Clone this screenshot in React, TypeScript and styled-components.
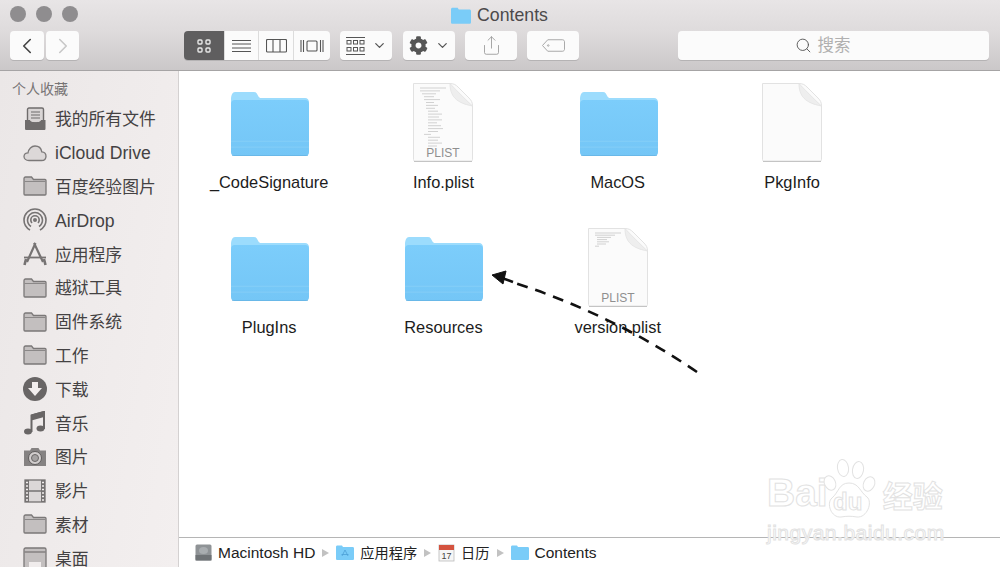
import { ReactNode } from "react"
import styled, { createGlobalStyle } from "styled-components"
import { ChevronDown, ChevronLeft, ChevronRight, Search, Share } from "lucide-react"
import { FaCog } from "react-icons/fa"

const GlobalStyle = createGlobalStyle`
    html, body {
        margin: 0;
        padding: 0;
        background: #fff;
    }
    body {
        font-family: "Liberation Sans", "Noto Sans CJK SC", sans-serif;
    }
`

const FolderGlyph = () => (
    <svg width="24" height="20" viewBox="0 0 24 20">
        <path d="M1 18V2.500C1 1.700 1.700 1 2.500 1H8.500L10.500 3.500H22C22.600 3.500 23 4 23 4.500V18C23 18.600 22.600 19 22 19H2C1.400 19 1 18.600 1 18Z" fill="#c3bfbf" stroke="#7b7878" strokeWidth="1.300" />
        <path d="M1.500 5.500H22.500" stroke="#8b8888" strokeWidth="1" />
    </svg>
)

const sidebarIcons: Record<string, ReactNode> = {
    folder: <FolderGlyph />,
    files: (
        <svg width="24" height="24" viewBox="0 0 24 24">
            <rect x="4.500" y="1" width="16" height="15" rx="1.500" fill="#d9d5d5" stroke="#6f6c6c" strokeWidth="1.400" />
            <path d="M8 5H17M8 8H17M8 11H17" stroke="#6f6c6c" strokeWidth="1.200" />
            <path d="M2 13H7C7 16 18 16 18 13H22.500V21.500C22.500 22.500 22 23 21 23H3.500C2.500 23 2 22.500 2 21.500Z" fill="#6f6c6c" />
        </svg>
    ),
    cloud: (
        <svg width="24" height="18" viewBox="0 0 24 18">
            <path d="M6 16.500C3 16.500 1 14.800 1 12.500C1 10.300 2.800 8.800 5 8.800C5.600 5 8.500 2 12 2C15.500 2 18.200 4.500 18.800 7.800C21.200 8 23 9.800 23 12.200C23 14.800 21 16.500 18.500 16.500Z" fill="#dcd8d8" stroke="#7b7878" strokeWidth="1.300" />
        </svg>
    ),
    airdrop: (
        <svg width="24" height="24" viewBox="0 0 24 24" fill="none" stroke="#767373">
            <path d="M7 22C3.500 20 1 16.300 1 12C1 6 6 1 12 1C18 1 23 6 23 12C23 16.300 20.500 20 17 22" strokeWidth="1.600" />
            <path d="M8 18.500C5.800 17 4.500 14.700 4.500 12C4.500 7.900 7.900 4.500 12 4.500C16.100 4.500 19.500 7.900 19.500 12C19.500 14.700 18.200 17 16 18.500" strokeWidth="1.600" />
            <path d="M9 15C8.200 14.200 7.800 13.200 7.800 12C7.800 9.700 9.700 7.800 12 7.800C14.300 7.800 16.200 9.700 16.200 12C16.200 13.200 15.800 14.200 15 15" strokeWidth="1.600" />
            <circle cx="12" cy="12" r="2" fill="#767373" stroke="none" />
        </svg>
    ),
    apps: (
        <svg width="24" height="24" viewBox="0 0 24 24" fill="none" stroke="#767373">
            <path d="M12.500 1L4 20M11 1L20 20" strokeWidth="2.200" />
            <path d="M1 15.500H23" strokeWidth="1.800" />
            <path d="M3 17L1.500 23M21 17L22.500 23" strokeWidth="2.600" />
        </svg>
    ),
    download: (
        <svg width="24" height="24" viewBox="0 0 24 24">
            <circle cx="12" cy="12" r="12" fill="#686565" />
            <path d="M9 5H15V11H19L12 19L5 11H9Z" fill="#f2eeee" />
        </svg>
    ),
    music: (
        <svg width="24" height="24" viewBox="0 0 24 24">
            <path d="M8.500 4.500L21 1V18" fill="none" stroke="#696666" strokeWidth="2" />
            <path d="M8.500 4.500V21M8.500 4.500L21 1V5L8.500 8.500Z" fill="#696666" stroke="#696666" strokeWidth="2" />
            <ellipse cx="5" cy="20.500" rx="4" ry="3" fill="#696666" />
            <ellipse cx="17.500" cy="17.500" rx="4" ry="3" fill="#696666" />
        </svg>
    ),
    camera: (
        <svg width="24" height="20" viewBox="0 0 24 20">
            <path d="M1 3.500H7L8.500 1H15.500L17 3.500H23V19H1Z" fill="#858282" />
            <circle cx="12" cy="11" r="6.500" fill="#d2cece" stroke="#5f5c5c" strokeWidth="1" />
            <circle cx="12" cy="11" r="3.500" fill="#a5a2a2" stroke="#6b6868" strokeWidth="1" />
        </svg>
    ),
    film: (
        <svg width="22" height="24" viewBox="0 0 22 24">
            <rect x="1" y="1" width="20" height="22" fill="#dbd7d7" stroke="#757272" strokeWidth="1.300" />
            <rect x="1" y="1" width="4" height="22" fill="#757272" />
            <rect x="17" y="1" width="4" height="22" fill="#757272" />
            <path d="M2 3.500H4M2 7H4M2 10.500H4M2 14H4M2 17.500H4M2 21H4M18 3.500H20M18 7H20M18 10.500H20M18 14H20M18 17.500H20M18 21H20" stroke="#f2eeee" strokeWidth="1.500" />
            <path d="M5 12H17" stroke="#757272" strokeWidth="1.500" />
        </svg>
    ),
    desktop: (
        <svg width="24" height="22" viewBox="0 0 24 22">
            <rect x="1" y="1" width="22" height="20" rx="1.500" fill="#c3bfbf" stroke="#7b7878" strokeWidth="1.300" />
            <path d="M1.500 5H22.500" stroke="#7b7878" strokeWidth="1.300" />
            <rect x="6" y="15" width="12" height="6" fill="#f0ecec" />
        </svg>
    ),
}

const sidebarItems = [
    { icon: "files", label: "我的所有文件" },
    { icon: "cloud", label: "iCloud Drive", latin: true },
    { icon: "folder", label: "百度经验图片" },
    { icon: "airdrop", label: "AirDrop", latin: true },
    { icon: "apps", label: "应用程序" },
    { icon: "folder", label: "越狱工具" },
    { icon: "folder", label: "固件系统" },
    { icon: "folder", label: "工作" },
    { icon: "download", label: "下载" },
    { icon: "music", label: "音乐" },
    { icon: "camera", label: "图片" },
    { icon: "film", label: "影片" },
    { icon: "folder", label: "素材" },
    { icon: "desktop", label: "桌面" },
]

const BigFolder = () => (
    <svg width="78" height="64" viewBox="0 0 78 65" preserveAspectRatio="none">
        <defs>
            <linearGradient id="folderFront" x1="0" y1="0" x2="0" y2="1">
                <stop offset="0" stopColor="#7ccdfb" />
                <stop offset="1" stopColor="#74c6f6" />
            </linearGradient>
        </defs>
        <path d="M0 8C0 3 1.500 0 4 0H23C25.500 0 26 2 27.500 4.500C28 5.500 29 6 30 6H74C76.500 6 78 8 78 10V20H0Z" fill="#9cdcfd" />
        <path d="M0 12C0 9.500 1.500 8 3.500 8H74.500C76.500 8 78 9.500 78 12V61C78 63.500 76.500 65 74.500 65H3.500C1.500 65 0 63.500 0 61Z" fill="url(#folderFront)" />
        <path d="M0 50H78M0 56H78" stroke="#8cd3f8" strokeWidth="1" opacity="0.7" />
        <path d="M1 64.500H77" stroke="#62aedf" strokeWidth="1" opacity="0.6" />
    </svg>
)

const codeLines = (dense: boolean) => {
    const lines = dense
        ? [[8, 26], [8, 20], [10, 14], [12, 10], [12, 16], [14, 8], [14, 12], [14, 9], [16, 10], [16, 14], [16, 11], [16, 14], [16, 9], [16, 13], [16, 15], [16, 10], [12, 7], [16, 12], [16, 10], [16, 14], [16, 9]]
        : [[8, 26], [8, 20], [10, 14], [10, 10], [10, 12], [10, 9], [8, 4]]
    const step = dense ? 2.900 : 2.200
    return lines.map(([x, w], i) => (
        <path key={i} d={`M${x} ${6 + i * step}H${x + w}`} stroke="#b5b5b5" strokeWidth="0.600" />
    ))
}

const PlistFile = ({ dense, label }: { dense: boolean; label?: string }) => (
    <svg width="62" height="80" viewBox="0 0 62 80">
        <path d="M1.500 1.500H38C42 1.500 44 3 46 5L57 16C59.500 18.500 60.500 20.500 60.500 24V77.500C60.500 78.500 60 79 59 79H3C2 79 1.500 78.500 1.500 77.500Z" fill="#fbfbfb" stroke="#e2e2e2" strokeWidth="1" />
        <path d="M2 79.500H60" stroke="#c4c4c4" strokeWidth="1" />
        <path d="M38 1.500C38 14 44 21 60.500 24C53 17 45 9 38 1.500Z" fill="#eeeeee" stroke="#e2e2e2" strokeWidth="0.800" />
        {label && codeLines(dense)}
        {label && <text x="31" y="75" textAnchor="middle" fontSize="12" fill="#8f8f8f" fontFamily="Liberation Sans">{label}</text>}
    </svg>
)

const files = [
    { kind: "folder", label: "_CodeSignature" },
    { kind: "dense", label: "Info.plist" },
    { kind: "folder", label: "MacOS" },
    { kind: "blank", label: "PkgInfo" },
    { kind: "folder", label: "PlugIns" },
    { kind: "folder", label: "Resources" },
    { kind: "sparse", label: "version.plist" },
]

const SmallFolder = ({ apps }: { apps?: boolean }) => (
    <svg width="18" height="15" viewBox="0 0 18 15">
        <path d="M0 2C0 1 .5 .5 1.500 .5H6L7 2H16.500C17.500 2 18 2.500 18 3.500V13.500C18 14.500 17.500 15 16.500 15H1.500C.5 15 0 14.500 0 13.500Z" fill="#7accf8" />
        {apps && <path d="M9 5L6 11M9 5L12 11M5.500 9.500H12.500" stroke="#4b9fd6" strokeWidth="0.800" fill="none" />}
    </svg>
)

const PathArrow = () => (
    <svg width="7" height="8" viewBox="0 0 7 8"><path d="M0 0L7 4L0 8Z" fill="#c2c2c2" /></svg>
)

export default function App() {
    return (
        <>
            <GlobalStyle />
            <Window>
                <Toolbar>
                    <TitleRow>
                        <Lights><Light /><Light /><Light /></Lights>
                        <Title>
                            <SmallFolder />
                            Contents
                        </Title>
                    </TitleRow>
                    <ControlRow>
                        <Segment>
                            <ToolButton $width={34}><ChevronLeft size={26} strokeWidth={1.500} color="#444" /></ToolButton>
                        </Segment>
                        <Segment $gap={2}>
                            <ToolButton $width={33}><ChevronRight size={26} strokeWidth={1.500} color="#c8c8c8" /></ToolButton>
                        </Segment>
                        <ViewGroup>
                            <ViewButton $active $width={40}>
                                <svg width="14" height="14" viewBox="0 0 14 14" fill="none" stroke="#e8e8e8" strokeWidth="1.400">
                                    <rect x="1" y="1" width="4" height="4" rx="1" />
                                    <rect x="9" y="1" width="4" height="4" rx="1" />
                                    <rect x="1" y="9" width="4" height="4" rx="1" />
                                    <rect x="9" y="9" width="4" height="4" rx="1" />
                                </svg>
                            </ViewButton>
                            <ViewButton $width={34}>
                                <svg width="19" height="14" viewBox="0 0 19 14" stroke="#555" strokeWidth="1">
                                    <path d="M0 1.500H19M0 5H19M0 9H19M0 12.500H19" />
                                </svg>
                            </ViewButton>
                            <ViewButton $width={35}>
                                <svg width="21" height="14" viewBox="0 0 21 14" fill="none" stroke="#555" strokeWidth="1.100">
                                    <rect x=".5" y=".5" width="20" height="12.500" rx="1" />
                                    <path d="M7 .5V13M14 .5V13" />
                                </svg>
                            </ViewButton>
                            <ViewButton $width={37}>
                                <svg width="24" height="14" viewBox="0 0 24 14" fill="none" stroke="#555" strokeWidth="1.100">
                                    <rect x="7" y="2" width="10" height="10" rx="1" />
                                    <path d="M1 1V13M3.500 1V13M20.500 1V13M23 1V13" />
                                </svg>
                            </ViewButton>
                        </ViewGroup>
                        <ToolButton $width={52} $left={10}>
                            <svg width="19" height="18" viewBox="0 0 19 18" fill="none" stroke="#555" strokeWidth="1">
                                <path d="M0 .5H19M0 17.500H19" />
                                <rect x="1" y="3.500" width="4" height="3.500" />
                                <rect x="7.500" y="3.500" width="4" height="3.500" />
                                <rect x="14" y="3.500" width="4" height="3.500" />
                                <rect x="1" y="10.500" width="4" height="3.500" />
                                <rect x="7.500" y="10.500" width="4" height="3.500" />
                                <rect x="14" y="10.500" width="4" height="3.500" />
                            </svg>
                            <ChevronDown size={15} strokeWidth={2} color="#555" />
                        </ToolButton>
                        <ToolButton $width={52} $left={11}>
                            <FaCog size={19} color="#555" />
                            <ChevronDown size={15} strokeWidth={2} color="#555" />
                        </ToolButton>
                        <ToolButton $width={52} $left={10}>
                            <Share size={21} strokeWidth={1} color="#9a9a9a" />
                        </ToolButton>
                        <ToolButton $width={52} $left={10}>
                            <svg width="23" height="13" viewBox="0 0 24 13" fill="none" stroke="#a5a5a5" strokeWidth="1">
                                <path d="M6 .5H21.500C22.500 .5 23.500 1.500 23.500 2.500V10.500C23.500 11.500 22.500 12.500 21.500 12.500H6L.5 6.500Z" />
                                <circle cx="6.500" cy="6.500" r="0.800" />
                            </svg>
                        </ToolButton>
                        <SearchField>
                            <Search size={17} strokeWidth={1.300} color="#555" />
                            <SearchHint>搜索</SearchHint>
                        </SearchField>
                    </ControlRow>
                </Toolbar>
                <Body>
                    <Sidebar>
                        <SectionTitle>个人收藏</SectionTitle>
                        {sidebarItems.map((item, index) => (
                            <SideRow key={index}>
                                <SideIcon>{sidebarIcons[item.icon]}</SideIcon>
                                <SideLabel $latin={item.latin}>{item.label}</SideLabel>
                            </SideRow>
                        ))}
                    </Sidebar>
                    <Content>
                        <FileGrid>
                            {files.map(file => (
                                <FileCell key={file.label}>
                                    <FileIcon>
                                        {file.kind === "folder" && <FolderSlot><BigFolder /></FolderSlot>}
                                        {file.kind === "dense" && <PlistFile dense label="PLIST" />}
                                        {file.kind === "sparse" && <PlistFile dense={false} label="PLIST" />}
                                        {file.kind === "blank" && <PlistFile dense={false} />}
                                    </FileIcon>
                                    <FileName>{file.label}</FileName>
                                </FileCell>
                            ))}
                        </FileGrid>
                        <PathBar>
                            <PathItem>
                                <svg width="17" height="17" viewBox="0 0 17 17">
                                    <rect x=".5" y=".5" width="16" height="16" rx="1.500" fill="#8f9396" />
                                    <rect x=".5" y="11" width="16" height="5.500" fill="#6f7376" />
                                    <ellipse cx="8.500" cy="6.500" rx="4.500" ry="3.500" fill="#a9adb0" />
                                </svg>
                                Macintosh HD
                            </PathItem>
                            <PathArrow />
                            <PathItem $cjk><SmallFolder apps />应用程序</PathItem>
                            <PathArrow />
                            <PathItem $cjk>
                                <svg width="17" height="18" viewBox="0 0 17 18">
                                    <rect x="1" y="1" width="15" height="16" fill="#f6f6f6" stroke="#bbb" strokeWidth="0.800" />
                                    <rect x="1" y="1" width="15" height="5" fill="#d4533f" />
                                    <text x="8.500" y="15" textAnchor="middle" fontSize="9" fill="#444" fontFamily="Liberation Sans">17</text>
                                </svg>
                                日历
                            </PathItem>
                            <PathArrow />
                            <PathItem><SmallFolder />Contents</PathItem>
                        </PathBar>
                    </Content>
                </Body>
                <ArrowOverlay width="1000" height="567" viewBox="0 0 1000 567">
                    <path d="M697 372Q612 314 512 282" stroke="#111" strokeWidth="2.600" strokeDasharray="11 8" fill="none" />
                    <path d="M492 275L506 271L503 284Z" fill="#111" stroke="#111" strokeWidth="1" />
                    <path d="M502 278L513 282" stroke="#111" strokeWidth="2.600" />
                </ArrowOverlay>
                <Watermark>
                    <WatermarkTop>
                        <WatermarkLatin>Bai</WatermarkLatin>
                        <svg width="56" height="60" viewBox="0 0 56 60" fill="#fff" stroke="#e2e2e2" strokeWidth="1">
                            <ellipse cx="7" cy="24" rx="5.500" ry="7.500" transform="rotate(-25 7 24)" />
                            <ellipse cx="20" cy="9" rx="5.500" ry="8.500" transform="rotate(-8 20 9)" />
                            <ellipse cx="35" cy="11" rx="5.500" ry="8.500" transform="rotate(10 35 11)" />
                            <ellipse cx="46" cy="25" rx="5.500" ry="7.500" transform="rotate(25 46 25)" />
                            <path d="M26 24C36 24 37 33 44 38C50 43 44 59 34 58C28 57 24 57 18 58C8 59 3 44 9 39C16 33 16 24 26 24Z" />
                        </svg>
                        <WatermarkDu>du</WatermarkDu>
                        <WatermarkLatin $small>经验</WatermarkLatin>
                    </WatermarkTop>
                    <WatermarkUrl>jingyan.baidu.com</WatermarkUrl>
                </Watermark>
            </Window>
        </>
    )
}

const Window = styled.div`
    position: relative;
    display: flex;
    flex-direction: column;
    width: 1000px;
    height: 567px;
    overflow: hidden;
    background: #fff;
`
const Toolbar = styled.div`
    flex: none;
    box-sizing: border-box;
    height: 71px;
    padding: 0 10px;
    background: linear-gradient(#e8e5e6, #dedbdc 45%, #cbc8c9);
    border-bottom: 1px solid #a6a4a5;
`
const TitleRow = styled.div`
    position: relative;
    display: flex;
    align-items: center;
    justify-content: center;
    height: 31px;
`
const Lights = styled.div`
    position: absolute;
    left: 0;
    top: 6px;
    display: flex;
    gap: 10px;
`
const Light = styled.span`
    width: 16px;
    height: 16px;
    border-radius: 50%;
    background: #8f8d8f;
`
const Title = styled.div`
    display: flex;
    align-items: center;
    gap: 6px;
    margin: -1px 0 0 -1px;
    font-size: 17.700px;
    color: #4c4a4b;
    svg {
        width: 20px;
        height: 17px;
    }
`
const ControlRow = styled.div`
    display: flex;
    height: 29px;
`
const Segment = styled.div<{ $gap?: number }>`
    display: flex;
    margin-left: ${p => p.$gap ?? 0}px;
`
const ToolButton = styled.div<{ $width: number; $left?: number }>`
    display: flex;
    align-items: center;
    justify-content: center;
    gap: 7px;
    box-sizing: border-box;
    width: ${p => p.$width}px;
    height: 29px;
    margin-left: ${p => p.$left ?? 0}px;
    background: #fbfbfb;
    border-radius: 4px;
    box-shadow: 0 1px 0 #b5b3b4;
`
const ViewGroup = styled.div`
    display: flex;
    margin-left: 105px;
    border-radius: 4px;
    overflow: hidden;
    box-shadow: 0 1px 0 #b5b3b4;
`
const ViewButton = styled.div<{ $active?: boolean; $width: number }>`
    display: flex;
    align-items: center;
    justify-content: center;
    box-sizing: border-box;
    width: ${p => p.$width}px;
    background: ${p => (p.$active ? "#5f5e5f" : "#fbfbfb")};
    & + & {
        border-left: 1px solid #dcdcdc;
    }
`
const SearchField = styled.div`
    display: flex;
    align-items: center;
    justify-content: center;
    gap: 6px;
    box-sizing: border-box;
    width: 311px;
    height: 29px;
    margin-left: 99px;
    padding-right: 22px;
    background: #fbfbfb;
    border-radius: 4px;
    box-shadow: 0 1px 0 #b5b3b4;
`
const SearchHint = styled.span`
    font-size: 16.500px;
    line-height: 20px;
    color: #b0b0b0;
    margin-top: -2px;
`
const Body = styled.div`
    flex: 1;
    display: flex;
    min-height: 0;
`
const Sidebar = styled.div`
    flex: none;
    box-sizing: border-box;
    width: 179px;
    padding: 9px 0 0 12px;
    overflow: hidden;
    background: linear-gradient(100deg, #ebe7e7, #f3efef);
    border-right: 1px solid #d4d1d1;
`
const SectionTitle = styled.div`
    height: 21px;
    margin-bottom: 1px;
    font-size: 14px;
    line-height: 19px;
    color: #777475;
`
const SideRow = styled.div`
    display: flex;
    align-items: center;
    height: 33.800px;
    white-space: nowrap;
`
const SideLabel = styled.span<{ $latin?: boolean }>`
    font-size: ${p => (p.$latin ? 17.600 : 16.800)}px;
    line-height: 20px;
    margin-top: ${p => (p.$latin ? 1 : 3)}px;
    color: #444243;
`
const SideIcon = styled.span`
    display: flex;
    align-items: center;
    justify-content: center;
    width: 24px;
    margin: 0 8px 0 11px;
`
const Content = styled.div`
    flex: 1;
    display: flex;
    flex-direction: column;
    min-width: 0;
`
const FileGrid = styled.div`
    flex: 1;
    display: grid;
    grid-template-columns: repeat(4, 174.300px);
    grid-auto-rows: 145px;
    padding: 11px 0 0 3px;
`
const FileCell = styled.div`
    display: flex;
    flex-direction: column;
    align-items: center;
`
const FileIcon = styled.div`
    display: flex;
    align-items: flex-end;
    justify-content: center;
    height: 80px;
`
const FolderSlot = styled.div`
    display: flex;
    margin: 0 0 6px 2px;
`
const FileName = styled.div`
    margin-top: 10px;
    font-size: 16.400px;
    line-height: 20px;
    color: #1c1c1c;
    white-space: nowrap;
`
const PathBar = styled.div`
    flex: none;
    display: flex;
    align-items: center;
    gap: 7px;
    box-sizing: border-box;
    height: 30px;
    padding-left: 16px;
    color: #222;
    background: #fff;
    border-top: 1px solid #b5b5b5;
`
const PathItem = styled.div<{ $cjk?: boolean }>`
    display: flex;
    align-items: center;
    gap: 6px;
    font-size: ${p => (p.$cjk ? 14.200 : 15.500)}px;
    line-height: 18px;
    white-space: nowrap;
`
const ArrowOverlay = styled.svg`
    position: absolute;
    left: 0;
    top: 0;
    pointer-events: none;
`
const Watermark = styled.div`
    position: absolute;
    left: 767px;
    top: 459px;
    color: #fff;
    -webkit-text-stroke: 1px #e2e2e2;
`
const WatermarkTop = styled.div`
    position: relative;
    display: flex;
    align-items: flex-end;
`
const WatermarkLatin = styled.span<{ $small?: boolean }>`
    font-size: ${p => (p.$small ? 30 : 39)}px;
    font-weight: 700;
    line-height: 44px;
    margin: ${p => (p.$small ? "0 0 0 4px" : "0 -5px 4px 0")};
`
const WatermarkDu = styled.span`
    position: absolute;
    left: 66px;
    bottom: 3px;
    font-size: 24px;
    font-weight: 700;
`
const WatermarkUrl = styled.div`
    margin-top: 3px;
    font-size: 21px;
    letter-spacing: 0.500px;
    line-height: 22px;
`
